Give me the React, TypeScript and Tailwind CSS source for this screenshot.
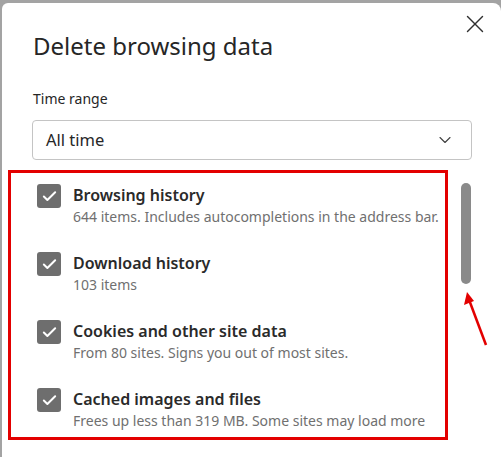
import { X, ChevronDown, Check } from 'lucide-react';

const items = [
  { title: 'Browsing history', sub: '644 items. Includes autocompletions in the address bar.' },
  { title: 'Download history', sub: '103 items' },
  { title: 'Cookies and other site data', sub: 'From 80 sites. Signs you out of most sites.' },
  { title: 'Cached images and files', sub: 'Frees up less than 319 MB. Some sites may load more' },
];

export default function App() {
  return (
    <div
      className="w-[501px] h-[457px] bg-[#a3a3a3] pt-[3px] pl-[2px] flex overflow-hidden"
      style={{ fontFamily: '"Noto Sans", "Open Sans", sans-serif' }}
    >
      <div className="relative flex-1 bg-white rounded-tl-[6px] rounded-tr-[8px] flex flex-col">
        <button type="button" aria-label="Close" className="absolute right-[11px] top-[6px] text-[#303030]">
          <X size={30} strokeWidth={1.1} />
        </button>

        <h1 className="pl-[31px] pt-[27px] text-[24px] leading-[32px] text-[#262626] font-normal">
          Delete browsing data
        </h1>

        <div className="pl-[31px] pt-[27px] text-[14px] leading-[20px] text-[#262626]">Time range</div>

        <div className="ml-[30px] mr-[29px] mt-[11px] h-[40px] border border-[#c4c4c4] rounded-[4px] flex items-center justify-between pl-[13px] pr-[16px] text-[16.5px] text-[#262626]">
          <span>All time</span>
          <ChevronDown size={20} strokeWidth={1.3} className="text-[#404040]" />
        </div>

        <div className="flex mt-[10px]">
          <div className="ml-[6px] w-[440px] h-[270px] border-[3px] border-[#e30000] pl-[26px] pt-[10px] flex flex-col gap-[24px]">
            {items.map((it) => (
              <div key={it.title} className="flex gap-[12px]">
                <div className="w-[24px] h-[24px] rounded-[3px] bg-[#6e6e6e] flex items-center justify-center shrink-0 mt-[1px]">
                  <Check size={17} strokeWidth={2.8} className="text-white" />
                </div>
                <div className="flex flex-col">
                  <span className="text-[16px] leading-[24px] font-semibold text-[#2a2a2a]">{it.title}</span>
                  <span className="text-[14px] leading-[20px] text-[#707070] whitespace-nowrap">{it.sub}</span>
                </div>
              </div>
            ))}
          </div>
          <div className="ml-[13px] mt-[13px] w-[10px] h-[101px] rounded-full bg-[#8a8a8a]" />
        </div>

        <svg className="absolute left-[455px] top-[284px]" width="40" height="65" viewBox="0 0 40 65">
          <line x1="29" y1="58" x2="11" y2="10" stroke="#e30000" strokeWidth="2.6" />
          <polygon points="10,5 7,18 17,14" fill="#e30000" />
        </svg>
      </div>
    </div>
  );
}
